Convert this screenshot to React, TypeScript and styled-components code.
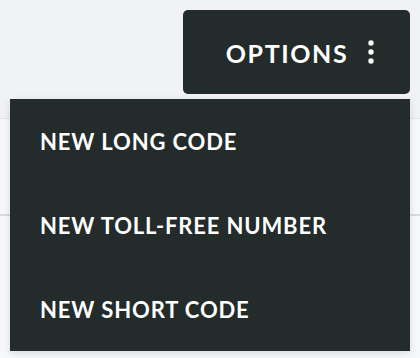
import { useState } from "react";
import styled, { createGlobalStyle } from "styled-components";

const menuItems = ["NEW LONG CODE", "NEW TOLL-FREE NUMBER", "NEW SHORT CODE"];

const App = () => {
  const [open, setOpen] = useState<boolean>(true);

  return (
    <>
      <GlobalStyle />
      <Page>
        <Toolbar>
          <OptionsButton onClick={() => setOpen(!open)}>
            <span>OPTIONS</span>
            <DotsIcon width="8" height="26" viewBox="0 0 8 26">
              <circle cx="4" cy="4" r="2.7" />
              <circle cx="4" cy="13" r="2.7" />
              <circle cx="4" cy="22" r="2.7" />
            </DotsIcon>
          </OptionsButton>
        </Toolbar>
        <Card>
          <CardRow />
        </Card>
        {open ? (
          <Menu>
            {menuItems.map((text) => (
              <MenuItem key={text}>{text}</MenuItem>
            ))}
          </Menu>
        ) : null}
      </Page>
    </>
  );
};

const GlobalStyle = createGlobalStyle`
  html, body {
    margin: 0;
    padding: 0;
    background: #f1f2f4;
    font-family: Lato, "Liberation Sans", sans-serif;
  }
`;

const Page = styled.div`
  position: relative;
  width: 420px;
  height: 358px;
  overflow: hidden;
`;

const Toolbar = styled.div`
  display: flex;
  justify-content: flex-end;
  height: 118px;
  padding: 10px 10px 0;
  box-sizing: border-box;
`;

const OptionsButton = styled.button`
  display: flex;
  align-items: center;
  justify-content: center;
  gap: 19px;
  width: 227px;
  height: 84px;
  padding: 2px 0 0 8px;
  border: none;
  border-radius: 5px;
  background: #242b2b;
  color: #ffffff;
  font-family: Lato, "Liberation Sans", sans-serif;
  font-size: 25px;
  font-weight: 700;
  letter-spacing: 1.6px;
  cursor: pointer;
`;

const DotsIcon = styled.svg`
  fill: #ffffff;
  margin-top: -2px;
`;

const Card = styled.div`
  background: #f7f8f9;
  border-top: 1px solid #e2e4e6;
  height: 240px;
`;

const CardRow = styled.div`
  height: 95px;
  border-bottom: 2px solid #d9dbdd;
`;

const Menu = styled.ul`
  position: absolute;
  top: 99px;
  left: 10px;
  right: 10px;
  margin: 0;
  padding: 0;
  list-style: none;
  background: #242b2b;
  box-shadow: 0 2px 8px rgba(0, 0, 0, 0.12);
`;

const MenuItem = styled.li`
  display: flex;
  align-items: center;
  height: 84px;
  padding-left: 30px;
  color: #ffffff;
  font-size: 22px;
  font-weight: 700;
  letter-spacing: 0.85px;
  cursor: pointer;
`;

export default App;
